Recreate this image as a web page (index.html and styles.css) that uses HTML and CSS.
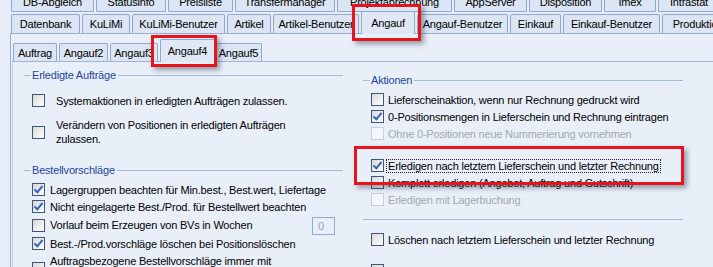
FILE: index.html
```html
<!DOCTYPE html>
<html lang="de">
<head>
    <meta charset="UTF-8">
    <title>Einstellungen - Angauf4</title>
    <link rel="stylesheet" href="styles.css">
</head>
<body>

<div class="window">
    <!-- obere Registerreihe (abgeschnitten) -->
    <div class="tabrow r1">
        <div class="tab">DB-Abgleich</div>
        <div class="tab">Statusinfo</div>
        <div class="tab">Preisliste</div>
        <div class="tab">Transfermanager</div>
        <div class="tab">Projektabrechnung</div>
        <div class="tab">AppServer</div>
        <div class="tab">Disposition</div>
        <div class="tab">Imex</div>
        <div class="tab">Intrastat</div>
    </div>
    <div class="tabrow r2">
        <div class="tab">Datenbank</div>
        <div class="tab">KuLiMi</div>
        <div class="tab">KuLiMi-Benutzer</div>
        <div class="tab">Artikel</div>
        <div class="tab">Artikel-Benutzer</div>
        <div class="tab sel mark">Angauf</div>
        <div class="tab">Angauf-Benutzer</div>
        <div class="tab">Einkauf</div>
        <div class="tab">Einkauf-Benutzer</div>
        <div class="tab">Produktion</div>
    </div>

    <div class="panel">
        <div class="tabrow sub">
            <div class="tab">Auftrag</div>
            <div class="tab">Angauf2</div>
            <div class="tab">Angauf3</div>
            <div class="tab sel mark">Angauf4</div>
            <div class="tab">Angauf5</div>
        </div>

        <div class="page">
            <div class="col col-left">
                <div class="legend"><span>Erledigte Aufträge</span></div>
                <div class="check loose first"><span class="cb"></span><span>Systemaktionen in erledigten Aufträgen zulassen.</span></div>
                <div class="check loose two next"><span class="cb"></span><span>Verändern von Positionen in erledigten Aufträgen<br>zulassen.</span></div>

                <div class="legend second"><span>Bestellvorschläge</span></div>
                <div class="check"><span class="cb on"></span><span>Lagergruppen beachten für Min.best., Best.wert, Liefertage</span></div>
                <div class="check"><span class="cb on"></span><span>Nicht eingelagerte Best./Prod. für Bestellwert beachten</span></div>
                <div class="check"><span class="cb"></span><span>Vorlauf beim Erzeugen von BVs in Wochen</span><span class="num">0</span></div>
                <div class="check"><span class="cb on"></span><span>Best.-/Prod.vorschläge löschen bei Positionslöschen</span></div>
                <div class="check two tail"><span class="cb"></span><span>Auftragsbezogene Bestellvorschläge immer mit<br>Bestellmenge des Auftrags erzeugen</span></div>
            </div>

            <div class="col col-right">
                <div class="legend"><span>Aktionen</span></div>
                <div class="check tight"><span class="cb"></span><span>Lieferscheinaktion, wenn nur Rechnung gedruckt wird</span></div>
                <div class="check tight"><span class="cb on"></span><span>0-Positionsmengen in Lieferschein und Rechnung eintragen</span></div>
                <div class="check tight off"><span class="cb"></span><span>Ohne 0-Positionen neue Nummerierung vornehmen</span></div>

                <div class="marked">
                    <div class="sep"></div>
                    <div class="check tight after-sep"><span class="cb on"></span><span class="focus">Erledigen nach letztem Lieferschein und letzter Rechnung</span></div>
                    <div class="check tight"><span class="cb"></span><span>Komplett erledigen (Angebot, Auftrag und Gutschrift)</span></div>
                </div>
                <div class="check tight off"><span class="cb"></span><span>Erledigen mit Lagerbuchung</span></div>

                <div class="sep wide"></div>
                <div class="check tight"><span class="cb"></span><span>Löschen nach letztem Lieferschein und letzter Rechnung</span></div>
                <div class="check tight last"><span class="cb on"></span><span>Markieren für Sammelbuchung bei Angebot / Auftrag auf</span></div>
            </div>
        </div>
    </div>
</div>

</body>
</html>
```

FILE: styles.css
```css
/* Grundlayout */
* {
    margin: 0;
    padding: 0;
    box-sizing: border-box;
}

html, body {
    height: 100%;
}

body {
    font-family: "Liberation Sans", Arial, sans-serif;
    font-size: 11px;
    letter-spacing: -0.2px;
    color: #000;
    background: #e6edf8;
    overflow: hidden;
}

.window {
    padding-left: 10px;
}

/* Registerreihen */
.tabrow {
    display: flex;
    gap: 2px;
    padding-left: 1px;
    white-space: nowrap;
}

.tab {
    flex: none;
    display: flex;
    align-items: center;
    justify-content: center;
    background: #dbe5f3;
    border: 1px solid #91a8cf;
    border-bottom: none;
    border-radius: 2px 2px 0 0;
}

.r1 {
    margin-top: -8px;
    height: 20px;
}

.r1 .tab {
    height: 20px;
    border-bottom: 1px solid #91a8cf;
}

.r1 .tab:nth-child(1) { width: 83px; }
.r1 .tab:nth-child(2) { width: 70px; }
.r1 .tab:nth-child(3) { width: 65px; }
.r1 .tab:nth-child(4) { width: 100px; }
.r1 .tab:nth-child(5) { width: 115px; }
.r1 .tab:nth-child(6) { width: 73px; }
.r1 .tab:nth-child(7) { width: 73px; }
.r1 .tab:nth-child(8) { width: 52px; }
.r1 .tab:nth-child(9) { width: 62px; }

.r2 {
    margin-top: 2px;
    height: 19px;
    align-items: flex-end;
}

.r2 .tab {
    height: 19px;
}

.r2 .tab:nth-child(1) { width: 69px; }
.r2 .tab:nth-child(2) { width: 48px; }
.r2 .tab:nth-child(3) { width: 93px; }
.r2 .tab:nth-child(4) { width: 44px; }
.r2 .tab:nth-child(5) { width: 86px; }
.r2 .tab:nth-child(6) { width: 54px; }
.r2 .tab:nth-child(7) { width: 91px; }
.r2 .tab:nth-child(8) { width: 51px; }
.r2 .tab:nth-child(9) { width: 97px; }
.r2 .tab:nth-child(10) { width: 72px; }

.tab.sel {
    position: relative;
    z-index: 2;
    background: #e0e8f5;
    margin-bottom: -1px;
}

.r2 .tab.sel {
    height: 23px;
}

/* rote Markierungen */
.mark::after {
    content: "";
    position: absolute;
    border: 3px solid #e8141c;
    box-shadow: 3px 3px 5px rgba(40, 50, 70, 0.45);
    z-index: 10;
    pointer-events: none;
}

.r2 .mark::after {
    left: -10px;
    right: -7px;
    top: -8px;
    bottom: -7px;
}

/* Hauptbereich */
.panel {
    border-top: 1px solid #98aed3;
    border-left: 1px solid #98aed3;
    background: #e9eff9;
    padding-left: 2px;
    height: 300px;
}

.sub {
    margin-top: 9px;
    height: 18px;
    align-items: flex-end;
    padding-left: 0;
}

.sub .tab {
    height: 18px;
}

.sub .tab:nth-child(1) { width: 44px; }
.sub .tab:nth-child(2) { width: 49px; }
.sub .tab:nth-child(3) { width: 48px; }
.sub .tab:nth-child(4) { width: 55px; margin-right: -2px; }
.sub .tab:nth-child(5) { width: 47px; }

.sub .tab.sel {
    height: 23px;
}

.sub .mark::after {
    left: -10px;
    right: -3px;
    top: -5px;
    bottom: -5px;
}

.page {
    margin-left: -1px;
    border-top: 1px solid #9fb4d7;
    border-left: 1px solid #c3d1e8;
    padding-left: 11px;
    display: grid;
    grid-template-columns: 319px 320px;
    column-gap: 20px;
    height: 260px;
}

/* Gruppenrahmen */
.legend {
    display: flex;
    align-items: center;
    height: 14px;
    color: #23469b;
}

.legend::before {
    content: "";
    width: 7px;
    height: 1px;
    background: #a6bad8;
}

.legend span {
    padding: 0 2px 0 1px;
}

.legend::after {
    content: "";
    flex: 1;
    height: 1px;
    background: #a6bad8;
}

.col-left {
    padding-top: 6px;
}

.col-right {
    padding-top: 11px;
}

/* Kontrollkästchen */
.check {
    display: flex;
    align-items: center;
    gap: 5px;
    min-height: 17px;
    padding-left: 8px;
    white-space: nowrap;
}

.legend + .check {
    margin-top: 4px;
}

.check.loose {
    gap: 11px;
}

.check.tight {
    gap: 4px;
}

.check.two {
    line-height: 14px;
}

.check.first {
    margin-top: 10px;
}

.check.next {
    margin-top: 9px;
}

.legend.second {
    margin-top: 17px;
}

.check.tail {
    margin-top: 2px;
}

.check.last {
    margin-top: 14px;
}

.cb {
    position: relative;
    flex: none;
    width: 13px;
    height: 13px;
    border: 1px solid #3d5679;
    background: linear-gradient(135deg, #d6d8d6 0%, #eeefec 55%, #fdfdfc 100%);
}

.cb.on::after {
    content: "";
    position: absolute;
    left: 3px;
    top: 0;
    width: 3px;
    height: 7px;
    border: solid #3467bd;
    border-width: 0 2px 2px 0;
    transform: rotate(40deg);
}

.check.off {
    color: #a4a8ad;
}

.check.off .cb {
    border-color: #c6cfdc;
    background: #f4f6f9;
}

.num {
    margin-left: auto;
    margin-right: 8px;
    margin-top: 2px;
    width: 23px;
    height: 18px;
    border: 1px solid #8faad3;
    color: #a0a4aa;
    padding-left: 5px;
    line-height: 16px;
}

.focus {
    outline: 1px dotted #222;
    outline-offset: 0;
    padding: 0 1px;
    margin-left: -1px;
}

/* Trennlinien */
.sep {
    height: 1px;
    margin-top: 5px;
    background: #a6bad8;
}

.sep.wide {
    margin: 11px 0;
}

.check.after-sep {
    margin-top: 9px;
}

.marked {
    position: relative;
}

.marked::after {
    content: "";
    position: absolute;
    left: -9px;
    right: -1px;
    top: -1px;
    bottom: 6px;
    border: 3px solid #e8141c;
    box-shadow: 3px 3px 5px rgba(40, 50, 70, 0.45);
    z-index: 10;
}
```
